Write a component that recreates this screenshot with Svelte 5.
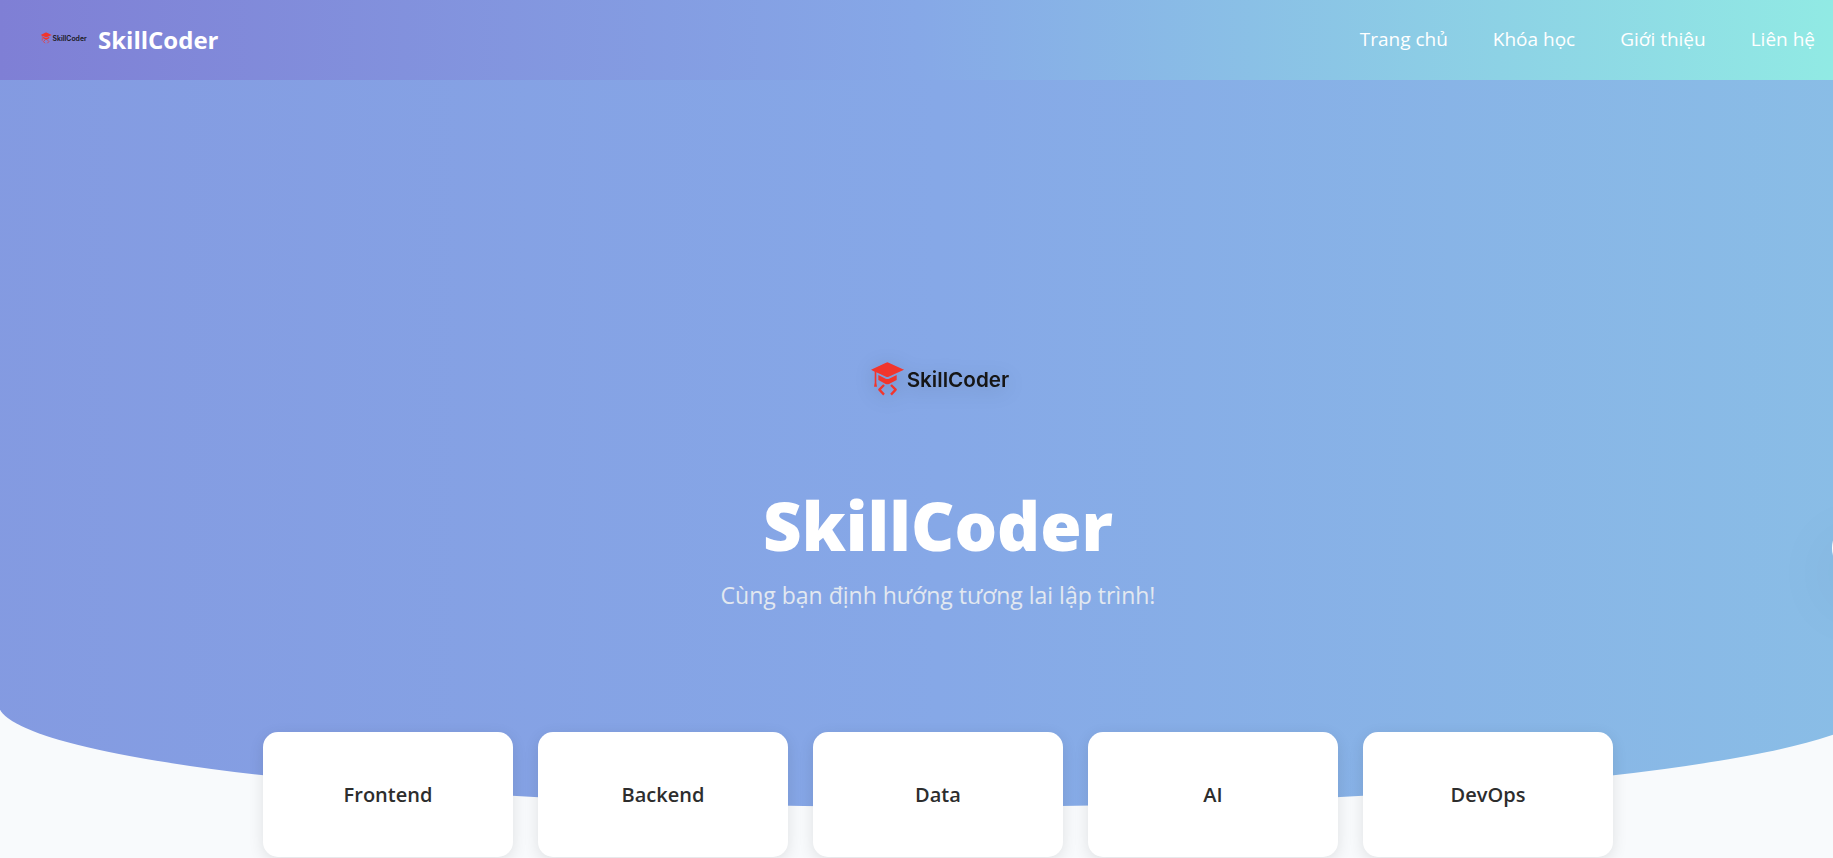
<script>
  const links = [
    { label: 'Trang chủ', href: '#home' },
    { label: 'Khóa học', href: '#courses' },
    { label: 'Giới thiệu', href: '#about' },
    { label: 'Liên hệ', href: '#contact' }
  ];
  const tracks = ['Frontend', 'Backend', 'Data', 'AI', 'DevOps'];
</script>

{#snippet logo()}
  <svg viewBox="90 62 414 104" aria-hidden="true">
    <g fill="#f2352c">
      <path d="M96 88 L141 67 Q145 65 149 67 L195 88 L149 109 Q145 111 141 109 L112 96 L112 127 L114 139 L105 139 L107 127 L107 94 Z" />
      <path d="M118 104 L140 115 Q145 117 150 115 L173 104 L173 119 L150 131 Q145 133 140 131 L118 119 Z" />
    </g>
    <g fill="none" stroke="#f2352c" stroke-width="7" stroke-linejoin="round">
      <path d="M135 134 L121 148 L135 163" />
      <path d="M156 134 L170 148 L156 163" />
    </g>
    <text x="203" y="139" font-size="62" font-weight="600" fill="#161616">SkillCoder</text>
  </svg>
{/snippet}

<div class="page">
  <header>
    <a class="brand" href="#home">
      <span class="brand-logo">{@render logo()}</span>
      <span>SkillCoder</span>
    </a>
    <nav>
      {#each links as link}
        <a href={link.href}>{link.label}</a>
      {/each}
    </nav>
  </header>

  <main>
    <section class="hero">
      <div class="hero-logo">{@render logo()}</div>
      <h1>SkillCoder</h1>
      <p>Cùng bạn định hướng tương lai lập trình!</p>
    </section>
    <section class="tracks">
      {#each tracks as track}
        <button type="button">{track}</button>
      {/each}
    </section>
  </main>
  <button class="chat" type="button" aria-label="Chat"></button>
</div>

<style>
  :global(body) {
    background: #f8fafc;
    overflow: hidden;
  }
  .page {
    position: relative;
    overflow: hidden;
    padding-bottom: 40px;
    font-family: 'Segoe UI', 'Open Sans', 'Noto Sans', sans-serif;
  }
  svg {
    display: block;
    width: 100%;
    overflow: visible;
  }
  svg text {
    font-family: Inter, sans-serif;
  }
  header {
    display: flex;
    align-items: center;
    justify-content: space-between;
    height: 80px;
    box-sizing: border-box;
    padding: 0 18px 2px 40px;
    background: linear-gradient(90deg, #7f7fd5, #86a8e7, #91eae4);
  }
  header a {
    color: #fff;
    text-decoration: none;
  }
  .brand {
    display: flex;
    align-items: center;
    gap: 12px;
    font-size: 24px;
    font-weight: 700;
  }
  .brand-logo {
    width: 46px;
    padding-bottom: 2px;
  }
  nav {
    display: flex;
    gap: 45px;
    font-size: 19px;
  }
  main {
    width: calc(100% + 43px);
  }
  .hero {
    display: flex;
    flex-direction: column;
    align-items: center;
    box-sizing: border-box;
    height: 727px;
    margin: 0 -2px;
    padding-top: 281px;
    border-radius: 0 0 50% 50% / 0 0 104px 104px;
    background: linear-gradient(90deg, #7f7fd5, #86a8e7, #91eae4) 50% 50% / 300% 100%;
  }
  .hero-logo {
    width: 138px;
    filter: drop-shadow(0 4px 10px rgba(0, 0, 0, 0.15));
  }
  h1 {
    margin: 80px 0 0;
    font-size: 67px;
    line-height: 98px;
    font-weight: 800;
    color: #fff;
  }
  p {
    margin: 4px 0 0;
    font-size: 23px;
    line-height: 34px;
    color: #e2e8f0;
  }
  .tracks {
    display: flex;
    justify-content: center;
    gap: 25px;
    margin-top: -75px;
  }
  .tracks button {
    width: 250px;
    height: 125px;
    border: 0;
    border-radius: 15px;
    background: #fff;
    box-shadow: 0 4px 15px rgba(0, 0, 0, 0.1);
    color: #2d2d2d;
    font: 600 20px 'Segoe UI', 'Open Sans', 'Noto Sans', sans-serif;
  }
  .chat {
    position: absolute;
    top: 520px;
    right: -55px;
    width: 56px;
    height: 56px;
    border: 0;
    border-radius: 50%;
    background: #fff;
    box-shadow: 0 25px 70px rgba(0, 0, 0, 0.08);
  }
</style>
